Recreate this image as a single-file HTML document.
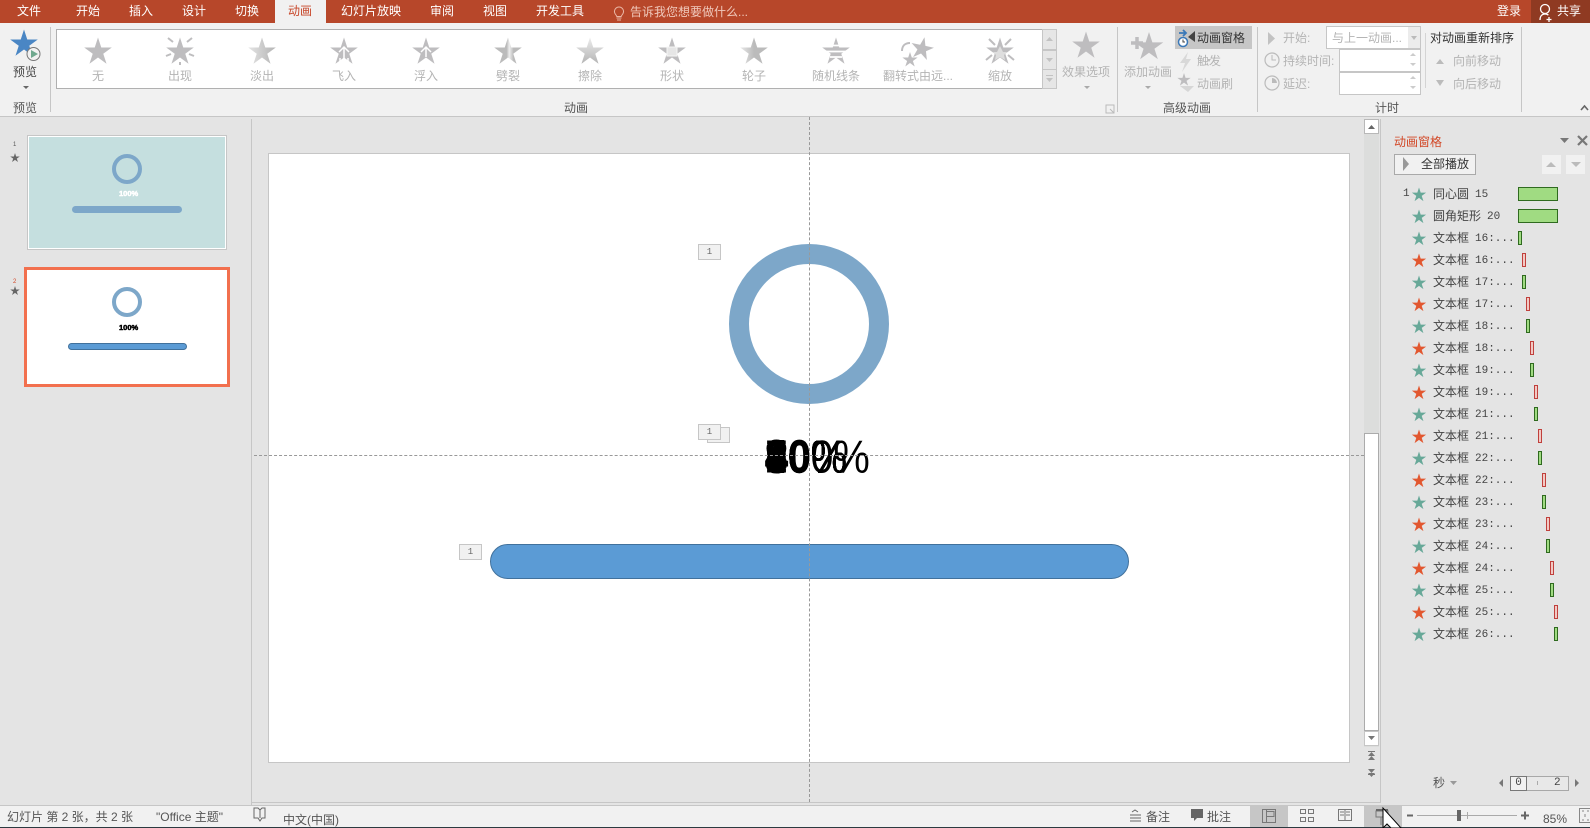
<!DOCTYPE html>
<html><head><meta charset="utf-8"><title>PowerPoint</title>
<style>
html,body{margin:0;padding:0;width:1590px;height:828px;overflow:hidden;background:#e4e4e4}
body{position:relative;font:12px/16px "Liberation Sans","Noto Sans CJK SC",sans-serif;color:#444}
div,span,i,b{position:absolute;display:block;box-sizing:border-box}
.t{white-space:nowrap}
.c{white-space:nowrap;transform:translateX(-50%)}
.w{color:#fff}
.g{color:#b4b4b4}
.k{color:#555}
.tag{background:#f1f1f1;border:1px solid #c6c6c6;font:9px/14px "Liberation Mono",monospace;color:#666;text-align:center}
.r{left:1394px;width:190px;height:22px}
.r .a{left:39px;top:3px;font:12px/16px "WenQuanYi Zen Hei","Noto Sans CJK SC",sans-serif;color:#444;white-space:nowrap}
.r .n{left:81px;top:4px;font:11px/16px "Liberation Mono",monospace;color:#444;white-space:pre}
.r i{top:4px;width:4px;height:14px}
.gb{background:#a0db82;border:1px solid #2f6a1f}
.rb{background:#f2c9c4;border:1px solid #c0403c}
.big{left:765px;top:434px;font:41px/46px "Liberation Sans",sans-serif;color:#000;white-space:nowrap;transform:scaleY(1.12);transform-origin:50% 55%}
.bd{font-weight:bold;-webkit-text-stroke:1px #000}
</style></head><body>

<!-- title bar -->
<div style="left:0;top:0;width:1590px;height:23px;background:#b7472a"></div>
<div style="left:1531px;top:0;width:59px;height:23px;background:#8f3a22"></div>
<div style="left:275px;top:0;width:51px;height:23px;background:#f1f1f1"></div>
<div class="c w" style="left:29px;top:3px">文件</div>
<div class="c w" style="left:88px;top:3px">开始</div>
<div class="c w" style="left:141px;top:3px">插入</div>
<div class="c w" style="left:194px;top:3px">设计</div>
<div class="c w" style="left:247px;top:3px">切换</div>
<div class="c" style="left:300px;top:3px;color:#c8472a">动画</div>
<div class="c w" style="left:371px;top:3px">幻灯片放映</div>
<div class="c w" style="left:442px;top:3px">审阅</div>
<div class="c w" style="left:495px;top:3px">视图</div>
<div class="c w" style="left:560px;top:3px">开发工具</div>
<div class="t" style="left:630px;top:4px;color:#f0c9bc">告诉我您想要做什么...</div>
<div class="c w" style="left:1509px;top:3px">登录</div>
<div class="c w" style="left:1569px;top:3px">共享</div>

<!-- ribbon -->
<div style="left:0;top:23px;width:1590px;height:94px;background:#f1f1f1;border-bottom:1px solid #c6c6c6"></div>
<div style="left:50px;top:27px;width:1px;height:85px;background:#c6c6c6"></div>
<div style="left:1117px;top:27px;width:1px;height:85px;background:#c6c6c6"></div>
<div style="left:1257px;top:27px;width:1px;height:85px;background:#c6c6c6"></div>
<div style="left:1521px;top:27px;width:1px;height:85px;background:#c6c6c6"></div>
<div style="left:1425px;top:33px;width:1px;height:55px;background:#d4d4d4"></div>
<div style="left:56px;top:29px;width:987px;height:60px;background:#fff;border:1px solid #b0b0b0"></div>
<div style="left:1042px;top:29px;width:15px;height:21px;background:#e6e6e6;border:1px solid #c6c6c6"></div>
<div style="left:1042px;top:50px;width:15px;height:20px;background:#e6e6e6;border:1px solid #c6c6c6"></div>
<div style="left:1042px;top:69px;width:15px;height:20px;background:#e6e6e6;border:1px solid #c6c6c6"></div>

<div class="c" style="left:25px;top:64px">预览</div>
<div class="c k" style="left:25px;top:100px">预览</div>
<div class="c g" style="left:98px;top:68px">无</div>
<div class="c g" style="left:180px;top:68px">出现</div>
<div class="c g" style="left:262px;top:68px">淡出</div>
<div class="c g" style="left:344px;top:68px">飞入</div>
<div class="c g" style="left:426px;top:68px">浮入</div>
<div class="c g" style="left:508px;top:68px">劈裂</div>
<div class="c g" style="left:590px;top:68px">擦除</div>
<div class="c g" style="left:672px;top:68px">形状</div>
<div class="c g" style="left:754px;top:68px">轮子</div>
<div class="c g" style="left:836px;top:68px">随机线条</div>
<div class="c g" style="left:918px;top:68px">翻转式由远...</div>
<div class="c g" style="left:1000px;top:68px">缩放</div>
<div class="c k" style="left:576px;top:100px">动画</div>

<div class="c g" style="left:1086px;top:64px">效果选项</div>
<div class="c g" style="left:1148px;top:64px">添加动画</div>
<div style="left:1175px;top:26px;width:77px;height:23px;background:#c6c6c6"></div>
<div class="t" style="left:1197px;top:30px;color:#333">动画窗格</div>
<div class="t g" style="left:1197px;top:53px">触发</div>
<div class="t g" style="left:1197px;top:76px">动画刷</div>
<div class="c k" style="left:1187px;top:100px">高级动画</div>

<div class="t g" style="left:1283px;top:30px">开始:</div>
<div style="left:1326px;top:26px;width:95px;height:23px;background:#fff;border:1px solid #c6c6c6"></div>
<div style="left:1408px;top:27px;width:12px;height:21px;background:#ececec"></div>
<div class="t g" style="left:1332px;top:30px">与上一动画...</div>
<div class="t g" style="left:1283px;top:53px">持续时间:</div>
<div style="left:1339px;top:49px;width:82px;height:23px;background:#fff;border:1px solid #c6c6c6"></div>
<div class="t g" style="left:1283px;top:76px">延迟:</div>
<div style="left:1339px;top:72px;width:82px;height:23px;background:#fff;border:1px solid #c6c6c6"></div>
<div class="c k" style="left:1387px;top:100px">计时</div>
<div class="t" style="left:1430px;top:30px;color:#333">对动画重新排序</div>
<div class="t g" style="left:1453px;top:53px">向前移动</div>
<div class="t g" style="left:1453px;top:76px">向后移动</div>

<!-- left thumbnail panel -->
<div style="left:27px;top:135px;width:200px;height:115px;background:#c5dfdf;border:1px solid #c6c6c6;outline:1px solid #fff;outline-offset:-2px"></div>
<div style="left:112px;top:154px;width:30px;height:30px;border:4px solid #7da7c9;border-radius:50%"></div>
<div class="t" style="left:119px;top:186px;font:bold 7.5px/16px 'Liberation Sans',sans-serif;color:#fff;-webkit-text-stroke:.5px #fff">100%</div>
<div style="left:72px;top:206px;width:110px;height:7px;background:#7da7c9;border-radius:4px"></div>
<div class="t" style="left:13px;top:141px;font:6px/8px 'Liberation Sans',sans-serif;color:#555">1</div>

<div style="left:24px;top:267px;width:206px;height:120px;background:#fff;border:3px solid #f2704e"></div>
<div style="left:112px;top:287px;width:30px;height:30px;border:4px solid #7da7c9;border-radius:50%"></div>
<div class="t" style="left:119px;top:320px;font:bold 7.5px/16px 'Liberation Sans',sans-serif;color:#000;-webkit-text-stroke:.5px #000">100%</div>
<div style="left:68px;top:343px;width:119px;height:7px;background:#5b9bd5;border:1px solid #41719c;border-radius:4px"></div>
<div class="t" style="left:13px;top:278px;font:6px/8px 'Liberation Sans',sans-serif;color:#d24726">2</div>

<!-- editor frame -->
<div style="left:251px;top:119px;width:1px;height:708px;background:#c6c6c6"></div>
<div style="left:251px;top:802px;width:1130px;height:1px;background:#c6c6c6"></div>
<div style="left:1380px;top:119px;width:1px;height:684px;background:#c6c6c6"></div>

<!-- slide -->
<div style="left:268px;top:153px;width:1082px;height:610px;background:#fff;border:1px solid #c6c6c6"></div>
<div style="left:729px;top:244px;width:160px;height:160px;border:20px solid #7da7c9;border-radius:50%"></div>
<div style="left:490px;top:544px;width:639px;height:35px;background:#5b9bd5;border:1px solid #41719c;border-radius:17.5px"></div>
<div class="big">100%</div><div class="big">10%</div><div class="big">20%</div><div class="big">30%</div><div class="big">40%</div><div class="big">50%</div><div class="big">60%</div><div class="big">70%</div><div class="big">80%</div><div class="big">90%</div>
<div class="big bd">8</div><div class="big bd">4</div>
<div class="big bd" style="left:788px;-webkit-text-stroke:.6px #000">0</div>
<div class="tag" style="left:707px;top:427px;width:23px;height:16px"></div>
<div class="tag" style="left:698px;top:424px;width:23px;height:16px">1</div>
<div class="tag" style="left:698px;top:244px;width:23px;height:16px">1</div>
<div class="tag" style="left:459px;top:544px;width:23px;height:16px">1</div>

<!-- guides -->
<div style="left:809px;top:117px;width:0;height:685px;border-left:1px dashed #999"></div>
<div style="left:254px;top:455px;width:1110px;height:0;border-top:1px dashed #999"></div>

<!-- scrollbar -->
<div style="left:1364px;top:119px;width:15px;height:683px;background:#dcdddc"></div>
<div style="left:1364px;top:119px;width:15px;height:15px;background:#fff;border:1px solid #b8b8b8"></div>
<div style="left:1364px;top:433px;width:15px;height:298px;background:#fff;border:1px solid #ababab"></div>
<div style="left:1364px;top:731px;width:15px;height:15px;background:#fff;border:1px solid #c6c6c6"></div>
<div style="left:1364px;top:747px;width:15px;height:55px;background:#e4e4e4"></div>

<!-- animation pane -->
<div class="t" style="left:1394px;top:134px;font-size:12px;color:#d24726">动画窗格</div>
<div style="left:1394px;top:154px;width:82px;height:21px;background:#f1f1f1;border:1px solid #a9a9a9"></div>
<div class="t" style="left:1421px;top:156px;color:#333">全部播放</div>
<div style="left:1542px;top:155px;width:19px;height:19px;background:#f1f1f1"></div>
<div style="left:1566px;top:155px;width:19px;height:19px;background:#f1f1f1"></div>

<div class="t" style="left:1403px;top:186px;font:11px/16px 'Liberation Mono',monospace">1</div>
<div class="r" style="top:183px"><span class="a">同心圆</span><span class="n">15</span><i class="gb" style="left:124px;width:40px"></i></div>
<div class="r" style="top:205px"><span class="a">圆角矩形</span><span class="n" style="left:93px">20</span><i class="gb" style="left:124px;width:40px"></i></div>
<div class="r" style="top:227px"><span class="a">文本框</span><span class="n">16:...</span><i class="gb" style="left:124px"></i></div>
<div class="r" style="top:249px"><span class="a">文本框</span><span class="n">16:...</span><i class="rb" style="left:128px"></i></div>
<div class="r" style="top:271px"><span class="a">文本框</span><span class="n">17:...</span><i class="gb" style="left:128px"></i></div>
<div class="r" style="top:293px"><span class="a">文本框</span><span class="n">17:...</span><i class="rb" style="left:132px"></i></div>
<div class="r" style="top:315px"><span class="a">文本框</span><span class="n">18:...</span><i class="gb" style="left:132px"></i></div>
<div class="r" style="top:337px"><span class="a">文本框</span><span class="n">18:...</span><i class="rb" style="left:136px"></i></div>
<div class="r" style="top:359px"><span class="a">文本框</span><span class="n">19:...</span><i class="gb" style="left:136px"></i></div>
<div class="r" style="top:381px"><span class="a">文本框</span><span class="n">19:...</span><i class="rb" style="left:140px"></i></div>
<div class="r" style="top:403px"><span class="a">文本框</span><span class="n">21:...</span><i class="gb" style="left:140px"></i></div>
<div class="r" style="top:425px"><span class="a">文本框</span><span class="n">21:...</span><i class="rb" style="left:144px"></i></div>
<div class="r" style="top:447px"><span class="a">文本框</span><span class="n">22:...</span><i class="gb" style="left:144px"></i></div>
<div class="r" style="top:469px"><span class="a">文本框</span><span class="n">22:...</span><i class="rb" style="left:148px"></i></div>
<div class="r" style="top:491px"><span class="a">文本框</span><span class="n">23:...</span><i class="gb" style="left:148px"></i></div>
<div class="r" style="top:513px"><span class="a">文本框</span><span class="n">23:...</span><i class="rb" style="left:152px"></i></div>
<div class="r" style="top:535px"><span class="a">文本框</span><span class="n">24:...</span><i class="gb" style="left:152px"></i></div>
<div class="r" style="top:557px"><span class="a">文本框</span><span class="n">24:...</span><i class="rb" style="left:156px"></i></div>
<div class="r" style="top:579px"><span class="a">文本框</span><span class="n">25:...</span><i class="gb" style="left:156px"></i></div>
<div class="r" style="top:601px"><span class="a">文本框</span><span class="n">25:...</span><i class="rb" style="left:160px"></i></div>
<div class="r" style="top:623px"><span class="a">文本框</span><span class="n">26:...</span><i class="gb" style="left:160px"></i></div>

<div class="t" style="left:1433px;top:775px;color:#555">秒</div>
<div style="left:1510px;top:776px;width:59px;height:15px;background:#e8e8e8;border:1px solid #a8a8a8"></div>
<div style="left:1510px;top:776px;width:17px;height:15px;background:#f1f1f1;border:1px solid #777;font:11px/13px 'Liberation Mono',monospace;text-align:center">0</div>
<div class="t" style="left:1554px;top:775px;font:11px/16px 'Liberation Mono',monospace">2</div>

<!-- status bar -->
<div style="left:0;top:805px;width:1590px;height:22px;background:#f1f1f1;border-top:1px solid #c6c6c6;overflow:hidden"></div>
<div style="left:0;top:827px;width:1590px;height:1px;background:#2c3a40"></div>
<div style="left:1250px;top:806px;width:38px;height:21px;background:#c6c6c6"></div>
<div style="left:1364px;top:806px;width:38px;height:21px;background:#c6c6c6"></div>
<div class="t" style="left:7px;top:809px;color:#555">幻灯片 第 2 张，共 2 张</div>
<div class="t" style="left:156px;top:809px;color:#555">"Office 主题"</div>
<div style="left:283px;top:806px;width:60px;height:21px;overflow:hidden"><span class="t" style="left:0;top:6px;color:#555">中文(中国)</span></div>
<div class="t" style="left:1146px;top:809px;color:#555">备注</div>
<div class="t" style="left:1207px;top:809px;color:#555">批注</div>
<div style="left:1543px;top:806px;width:30px;height:21px;overflow:hidden"><span class="t" style="left:0;top:5px;color:#555">85%</span></div>

<!-- icons -->
<svg width="1590" height="828" viewBox="0 0 1590 828" style="position:absolute;left:0;top:0">
<defs>
<polygon id="s" points="0,-1 .225,-.309 .951,-.309 .363,.118 .588,.809 0,.382 -.588,.809 -.363,.118 -.951,-.309 -.225,-.309"/>
<linearGradient id="fade" x1="0" x2="1" y1="0" y2="0"><stop offset="0" stop-color="#e4e4e4"/><stop offset="1" stop-color="#b4b4b4"/></linearGradient>
<linearGradient id="split" x1="0" x2="1" y1="0" y2="0"><stop offset="0" stop-color="#bbb"/><stop offset=".45" stop-color="#bbb"/><stop offset=".55" stop-color="#eee"/><stop offset=".7" stop-color="#bbb"/><stop offset="1" stop-color="#bbb"/></linearGradient>
<linearGradient id="wipe" x1="0" x2="0" y1="0" y2="1"><stop offset="0" stop-color="#ececec"/><stop offset="1" stop-color="#b4b4b4"/></linearGradient>
<linearGradient id="wheel" x1="0" x2="1" y1="0" y2="0"><stop offset="0" stop-color="#e8e8e8"/><stop offset=".5" stop-color="#bbb"/></linearGradient>
</defs>
<!-- preview -->
<use href="#s" transform="translate(24,44) scale(14.5)" fill="#4a86c4"/>
<circle cx="33.500" cy="54" r="6.500" fill="#f1f1f1" stroke="#777" stroke-width="1"/>
<polygon points="31,50 31,58 38,54" fill="#6fa88e"/>
<polygon points="23,86 29,86 26,89" fill="#666"/>
<!-- gallery -->
<g fill="#bebdbf">
<use href="#s" transform="translate(98,52) scale(14.500)"/>
<g transform="translate(3,0)"><use href="#s" transform="translate(177,52) scale(14.500)"/>
<path d="M165 38l5 4M189 38l-5 4M163 56l5-2M191 56l-5-2M177 62v3" stroke="#bebdbf" stroke-width="2" fill="none"/></g>
<use href="#s" transform="translate(262,52) scale(14.500)" fill="url(#fade)"/>
<g transform="translate(5,0)"><use href="#s" transform="translate(339,52) scale(14.500)"/>
<path d="M334 52l5-5 5 5M339 48v14M335 58v4M343 58v4" stroke="#fff" stroke-width="1.500" fill="none"/></g>
<g transform="translate(6,0)"><use href="#s" transform="translate(420,52) scale(14.500)"/>
<path d="M415 52l5-5 5 5M420 48v9" stroke="#fff" stroke-width="1.500" fill="none"/></g>
<use href="#s" transform="translate(508,52) scale(14.500)" fill="url(#split)"/>
<use href="#s" transform="translate(590,52) scale(14.500)" fill="url(#wipe)"/>
<g transform="translate(2,0)"><use href="#s" transform="translate(670,52) scale(14.500)"/>
<rect x="665" y="47" width="10" height="9" fill="#e6e6e6" stroke="#f6f6f6"/></g>
<use href="#s" transform="translate(754,52) scale(14.500)" fill="url(#wheel)"/>
<g transform="translate(4,0)"><use href="#s" transform="translate(832,52) scale(14.500)"/>
<path d="M820 45.500h24M822 51.500h20M826 57h12" stroke="#fff" stroke-width="1.800" fill="none"/></g>
<g transform="translate(5,0)"><use href="#s" transform="translate(917,49) scale(12) rotate(12)"/>
<use href="#s" transform="translate(905,60) scale(8)"/>
<path d="M897 51c0-5 3-8 8-8" stroke="#bebdbf" stroke-width="2" fill="none"/></g>
<g transform="translate(7,0)"><use href="#s" transform="translate(993,52) scale(14.500)"/>
<polygon points="993,46 996,52 1000,52 997,55 998,60 993,57 988,60 989,55 986,52 990,52" fill="#dedede"/>
<path d="M982 39l6 6M1004 39l-6 6M979 60l6-5M1007 60l-6-5" stroke="#bebdbf" stroke-width="2" fill="none"/></g>
</g>
<g fill="#c2c2c2" transform="translate(7,0)">
<polygon points="1039,41 1046,41 1042.500,37"/><polygon points="1039,58 1046,58 1042.500,62"/><polygon points="1039,78 1046,78 1042.500,82"/><rect x="1039" y="75" width="7" height="1"/>
</g>
<!-- effect + add -->
<use href="#s" transform="translate(1086,46) scale(14.500)" fill="#bebdbf"/>
<polygon points="1084,86 1090,86 1087,89" fill="#aaa"/>
<use href="#s" transform="translate(1149,47) scale(15)" fill="#bebdbf"/>
<path d="M1137 37v12M1131 43h12" stroke="#bebdbf" stroke-width="3.500"/>
<polygon points="1145,86 1151,86 1148,89" fill="#aaa"/>
<path d="M1106 105h8v8h-8zM1110 109l4 4" stroke="#bbb" fill="none"/>
<!-- pane icons -->
<g transform="translate(2,0)">
<path d="M1177 33h7M1181 30l3 3-3 3" stroke="#3a78b8" stroke-width="1.800" fill="none"/>
<circle cx="1181" cy="42" r="4.500" fill="#fff" stroke="#3a78b8" stroke-width="1.500"/>
<path d="M1181 39.500v2.500h2" stroke="#444" fill="none"/>
<polygon points="1193,31 1193,42 1186,37" fill="#444"/>
<polygon points="1186,52 1178,63 1183,63 1180,72 1189,59 1184,59" fill="#d8d8d8"/>
<use href="#s" transform="translate(1182,80) scale(7)" fill="#bebdbf"/>
<polygon points="1178,86 1192,86 1186,92" fill="#d6d6d6"/>
<polygon points="1205,59 1209,59 1207,62" fill="#bbb"/>
</g>
<!-- timing icons -->
<g transform="translate(3,0)">
<polygon points="1265,32 1265,45 1272,38.500" fill="#c2c2c2"/>
<circle cx="1269" cy="60" r="7" fill="none" stroke="#bbb" stroke-width="1.200"/>
<path d="M1269 55v5h4" stroke="#bbb" fill="none"/>
<circle cx="1269" cy="83" r="7" fill="none" stroke="#bbb" stroke-width="1.200"/>
<path d="M1269 78v5h5a5 5 0 0 0-5-5z" fill="#bbb"/>
</g>
<g transform="translate(5,0)">
<polygon points="1406,36 1412,36 1409,40" fill="#bbb"/>
<polygon points="1405,56 1411,56 1408,53" fill="#ccc"/><polygon points="1405,63 1411,63 1408,66" fill="#ccc"/>
<polygon points="1405,79 1411,79 1408,76" fill="#ccc"/><polygon points="1405,86 1411,86 1408,89" fill="#ccc"/>
<polygon points="1431,64 1439,64 1435,59" fill="#bbb"/>
<polygon points="1431,80 1439,80 1435,86" fill="#bbb"/>
</g>
<path d="M1581 110l3.500-4 3.500 4" stroke="#666" stroke-width="1.600" fill="none"/>
<!-- titlebar icons -->
<path d="M617 20h4M616.500 18h5M615 13.500a4.500 4.500 0 1 1 8 0c-.8 1.400-1.600 2-1.800 3h-4.400c-.2-1-1-1.600-1.800-3z" stroke="#eab7a6" fill="none"/>
<g transform="translate(8,0)">
<circle cx="1537" cy="9" r="4.500" fill="none" stroke="#fff" stroke-width="1.300"/>
<path d="M1532 20c0-4 2-6 5-6 1.500 0 2.600.4 3.400 1.200M1541 17v5M1538.500 19.500h5" stroke="#fff" stroke-width="1.300" fill="none"/>
</g>
<!-- thumb markers -->
<use href="#s" transform="translate(15,158) scale(5)" fill="#666"/>
<use href="#s" transform="translate(15,291) scale(5)" fill="#666"/>
<!-- scrollbar arrows -->
<polygon points="1368,129 1375,129 1371.500,125" fill="#666"/>
<polygon points="1368,736 1375,736 1371.500,740" fill="#777"/>
<g fill="#777"><rect x="1368" y="751" width="7" height="1"/><polygon points="1368,756 1375,756 1371.500,752"/><polygon points="1368,760 1375,760 1371.500,756"/>
<rect x="1368" y="774" width="7" height="1"/><polygon points="1368,769 1375,769 1371.500,773"/><polygon points="1368,773 1375,773 1371.500,777"/></g>
<!-- pane header -->
<polygon points="1560,138 1569,138 1564.500,143" fill="#777"/>
<path d="M1578 136l9 9M1587 136l-9 9" stroke="#777" stroke-width="2.200"/>
<polygon points="1403,157 1403,171 1409,164" fill="#999"/>
<polygon points="1546,167 1556,167 1551,162" fill="#bbb"/>
<polygon points="1571,162 1581,162 1576,167" fill="#bbb"/>
<!-- pane stars -->
<g fill="#67a898">
<use href="#s" transform="translate(1419,195) scale(7.500)"/><use href="#s" transform="translate(1419,217) scale(7.500)"/><use href="#s" transform="translate(1419,239) scale(7.500)"/><use href="#s" transform="translate(1419,283) scale(7.500)"/><use href="#s" transform="translate(1419,327) scale(7.500)"/><use href="#s" transform="translate(1419,371) scale(7.500)"/><use href="#s" transform="translate(1419,415) scale(7.500)"/><use href="#s" transform="translate(1419,459) scale(7.500)"/><use href="#s" transform="translate(1419,503) scale(7.500)"/><use href="#s" transform="translate(1419,547) scale(7.500)"/><use href="#s" transform="translate(1419,591) scale(7.500)"/><use href="#s" transform="translate(1419,635) scale(7.500)"/>
</g>
<g fill="#e2572f">
<use href="#s" transform="translate(1419,261) scale(7.500)"/><use href="#s" transform="translate(1419,305) scale(7.500)"/><use href="#s" transform="translate(1419,349) scale(7.500)"/><use href="#s" transform="translate(1419,393) scale(7.500)"/><use href="#s" transform="translate(1419,437) scale(7.500)"/><use href="#s" transform="translate(1419,481) scale(7.500)"/><use href="#s" transform="translate(1419,525) scale(7.500)"/><use href="#s" transform="translate(1419,569) scale(7.500)"/><use href="#s" transform="translate(1419,613) scale(7.500)"/>
</g>
<!-- timeline scale -->
<polygon points="1450,781 1457,781 1453.500,785" fill="#999"/>
<polygon points="1503,779 1503,787 1499,783" fill="#777"/>
<polygon points="1575,779 1575,787 1579,783" fill="#777"/>
<rect x="1537" y="781" width="1" height="4" fill="#aaa"/>
<!-- status icons -->
<path d="M254 808h4l2 2 2-2h3v10h-3l-2 3-2-3h-4z" fill="none" stroke="#666"/>
<path d="M260 810v8" stroke="#666"/>
<path d="M1132 812l3-2 3 2M1130 815h11M1130 818h11M1130 821h11" stroke="#666" fill="none"/>
<path d="M1191 809h12v9h-6l-3 3v-3h-3z" fill="#666"/>
<g fill="none" stroke="#777">
<rect x="1262.500" y="809.500" width="13" height="13"/><path d="M1266.500 810v12M1267 811.500h7v5h-7"/>
<rect x="1300.500" y="809.500" width="5" height="4"/><rect x="1308.500" y="809.500" width="5" height="4"/><rect x="1300.500" y="817.500" width="5" height="4"/><rect x="1308.500" y="817.500" width="5" height="4"/>
<rect x="1338.500" y="809.500" width="13" height="11"/><path d="M1345 809.500v11M1340 812h4M1340 815h4M1346 812h4M1346 815h4"/>
<path d="M1376 811h12v6h-12zM1381 817v8"/>
</g>
<path d="M1376 810h12" stroke="#666" stroke-width="2"/>
<path d="M1417 815.500h100" stroke="#aaa"/>
<rect x="1457" y="810" width="4" height="11" fill="#666"/>
<path d="M1467.500 812v7" stroke="#aaa"/>
<path d="M1407 815.500h6" stroke="#666" stroke-width="2"/>
<path d="M1521 815.500h8M1525 811.500v8" stroke="#666" stroke-width="2"/>
<rect x="1579.500" y="808.500" width="11" height="14" fill="none" stroke="#888"/>
<path d="M1582 811h2M1587 811h2M1582 820h2M1587 820h2M1585 814v3" stroke="#888" fill="none"/>
<polygon points="1383,808 1383,828 1387,824 1391,828 1401,828" fill="#fff" stroke="#000"/>
</svg>
</body></html>
